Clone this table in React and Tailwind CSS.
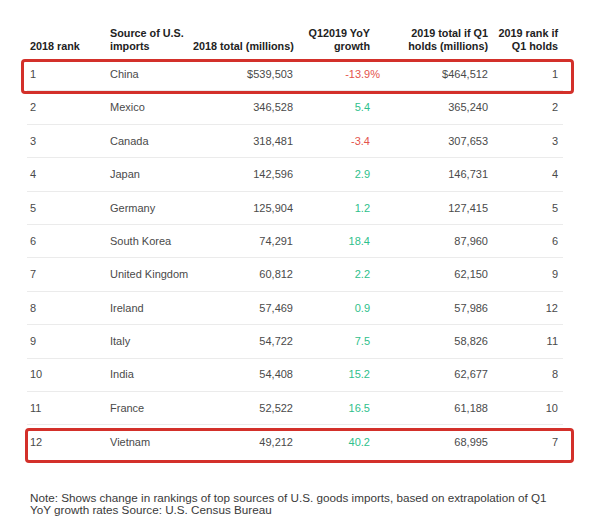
import React from "react";

const rows = [
  ["1", "China", "$539,503", "-13.9", "$464,512", "1", true],
  ["2", "Mexico", "346,528", "5.4", "365,240", "2"],
  ["3", "Canada", "318,481", "-3.4", "307,653", "3"],
  ["4", "Japan", "142,596", "2.9", "146,731", "4"],
  ["5", "Germany", "125,904", "1.2", "127,415", "5"],
  ["6", "South Korea", "74,291", "18.4", "87,960", "6"],
  ["7", "United Kingdom", "60,812", "2.2", "62,150", "9"],
  ["8", "Ireland", "57,469", "0.9", "57,986", "12"],
  ["9", "Italy", "54,722", "7.5", "58,826", "11"],
  ["10", "India", "54,408", "15.2", "62,677", "8"],
  ["11", "France", "52,522", "16.5", "61,188", "10"],
  ["12", "Vietnam", "49,212", "40.2", "68,995", "7"],
];

const grid = "grid grid-cols-[83px_83px_100px_77px_118px_75px]";

export default function App() {
  return (
    <div
      className="w-[605px] h-[521px] bg-white overflow-hidden pt-[27px] pl-[27px]"
      style={{ fontFamily: '"Liberation Sans", Arial, sans-serif' }}
    >
      <div className="w-[536px]">
        <div className={`${grid} items-end text-[10.8px] leading-[13px] font-bold text-[#222] mb-[5px]`}>
          <div className="pl-[3px]">2018 rank</div>
          <div>Source of U.S.<br />imports</div>
          <div className="text-right whitespace-nowrap">2018 total (millions)</div>
          <div className="text-right whitespace-nowrap">Q12019 YoY<br />growth</div>
          <div className="text-right whitespace-nowrap">2019 total if Q1<br />holds (millions)</div>
          <div className="text-right whitespace-nowrap pr-[5px]">2019 rank if<br />Q1 holds</div>
        </div>
        {rows.map((r, i) => {
          const neg = r[3].startsWith("-");
          const last = i === rows.length - 1;
          return (
            <div
              key={r[0]}
              className={`${grid} relative items-center h-[33.4px] text-[11px] text-[#4a4a4a] ${last ? "" : "border-b border-[#ebebeb]"}`}
            >
              <div className="pl-[3px]">{r[0]}</div>
              <div className="whitespace-nowrap">{r[1]}</div>
              <div className="text-right">{r[2]}</div>
              <div className={`text-right ${neg ? "text-[#e4534b]" : "text-[#2fbf8c]"}`}>
                {r[3]}
                {r[6] ? <span className="-mr-[10px]">%</span> : null}
              </div>
              <div className="text-right">{r[4]}</div>
              <div className="text-right pr-[5px]">{r[5]}</div>
              {i === 0 ? (
                <div className="absolute left-[-6px] right-[-11px] top-[1px] bottom-[-4px] border-[3px] border-[#d3302a] rounded-[4px]" />
              ) : null}
              {last ? (
                <div className="absolute left-[-2px] right-[-11px] top-[2.5px] bottom-[-4px] border-[3px] border-[#d3302a] rounded-[4px]" />
              ) : null}
            </div>
          );
        })}
        <div className="mt-[33px] pl-[3px] text-[11.7px] leading-[12.5px] text-[#3a3a3a] w-[540px]">
          Note: Shows change in rankings of top sources of U.S. goods imports, based on extrapolation of Q1 YoY growth rates Source: U.S. Census Bureau
        </div>
      </div>
    </div>
  );
}
